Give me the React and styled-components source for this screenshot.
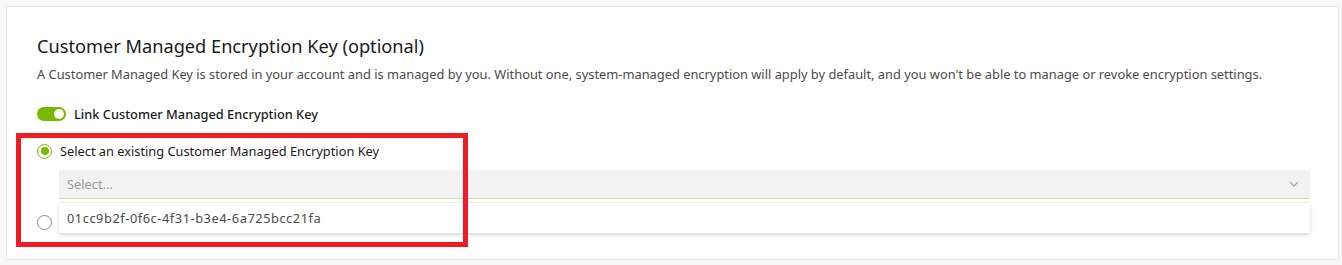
import styled, { createGlobalStyle } from "styled-components";

const GlobalStyle = createGlobalStyle`
    body {
        margin: 0;
        background: #f7f7f7;
        font-family: "Noto Sans", "Liberation Sans", sans-serif;
        color: #1a1a1a;
    }
`

function Chevron() {
    return (
        <svg width="12" height="12" viewBox="0 0 12 12" fill="none">
            <path d="M2.5 4.5 L6 8 L9.5 4.5" stroke="#a6a6a6" strokeWidth="1.2" strokeLinecap="round" strokeLinejoin="round" />
        </svg>
    )
}

function App() {
    return (
        <>
        <GlobalStyle />
        <Page>
            <Card>
                <Title>Customer Managed Encryption Key (optional)</Title>
                <Description>
                    A Customer Managed Key is stored in your account and is managed by you. Without one, system-managed encryption will apply by default, and you won't be able to manage or revoke encryption settings.
                </Description>
                <ToggleRow>
                    <Switch $on>
                        <span />
                    </Switch>
                    <ToggleLabel>Link Customer Managed Encryption Key</ToggleLabel>
                </ToggleRow>
                <Options>
                    <Highlight />
                    <RadioRow>
                        <Radio $checked />
                        <RadioLabel>Select an existing Customer Managed Encryption Key</RadioLabel>
                    </RadioRow>
                    <SelectWrap>
                        <SelectBox>
                            <Placeholder>Select...</Placeholder>
                            <Chevron />
                        </SelectBox>
                        <Menu>
                            <MenuItem>01cc9b2f-0f6c-4f31-b3e4-6a725bcc21fa</MenuItem>
                        </Menu>
                    </SelectWrap>
                    <RadioRow $second>
                        <Radio />
                    </RadioRow>
                </Options>
            </Card>
        </Page>
        </>
    )
}

const Page = styled.div`
    padding: 6px 3px 5px 6px;
`

const Card = styled.div`
    background: #fff;
    border: 1px solid #e8e8e8;
    height: 254px;
    box-sizing: border-box;
    padding: 27px 28px 0 30px;
`

const Title = styled.h2`
    margin: 0;
    font-size: 18.2px;
    font-weight: 400;
    line-height: 24px;
    color: #1a1a1a;
`

const Description = styled.p`
    margin: 7px 0 0;
    font-size: 12.85px;
    line-height: 18px;
    color: #4b4b4b;
`

const ToggleRow = styled.div`
    display: flex;
    align-items: center;
    gap: 8px;
    height: 18px;
    margin-top: 22px;
`

const Switch = styled.div`
    width: 29px;
    height: 14px;
    border-radius: 7px;
    background: ${p => p.$on ? "#76b900" : "#c4c4c4"};
    position: relative;

    span {
        position: absolute;
        top: 2px;
        left: ${p => p.$on ? "17px" : "2px"};
        width: 10px;
        height: 10px;
        border-radius: 50%;
        background: #fff;
    }
`

const ToggleLabel = styled.span`
    font-size: 12.8px;
    font-weight: 500;
    color: #1a1a1a;
`

const Options = styled.div`
    position: relative;
    margin-top: 19px;
`

const Highlight = styled.div`
    position: absolute;
    left: -21px;
    top: -9px;
    width: 452px;
    height: 114px;
    border: 5px solid #ee1c25;
    box-sizing: border-box;
    z-index: 5;
    pointer-events: none;
`

const RadioRow = styled.div`
    display: flex;
    align-items: center;
    gap: 8px;
    height: 18px;
    margin-top: ${p => p.$second ? "14px" : "0"};
`

const Radio = styled.span`
    width: 15px;
    height: 15px;
    box-sizing: border-box;
    border-radius: 50%;
    border: 1.5px solid ${p => p.$checked ? "#76b900" : "#8c8c8c"};
    display: flex;
    align-items: center;
    justify-content: center;

    &::after {
        content: "";
        display: ${p => p.$checked ? "block" : "none"};
        width: 8px;
        height: 8px;
        border-radius: 50%;
        background: #76b900;
    }
`

const RadioLabel = styled.span`
    font-size: 12.8px;
    color: #1a1a1a;
`

const SelectWrap = styled.div`
    position: relative;
    margin: 10px 0 0 22px;
`

const SelectBox = styled.div`
    height: 29px;
    box-sizing: border-box;
    background: #f2f2f2;
    border-bottom: 1px solid #c8e39c;
    display: flex;
    align-items: center;
    justify-content: space-between;
    padding: 0 10px 0 8px;
`

const Placeholder = styled.span`
    font-size: 12.8px;
    color: #9a9a9a;
`

const Menu = styled.div`
    position: absolute;
    top: 32px;
    left: 0;
    right: 0;
    background: #fff;
    border-top: 1px solid #ececec;
    box-shadow: 0 2px 4px rgba(0, 0, 0, 0.16);
    z-index: 3;
`

const MenuItem = styled.div`
    height: 30px;
    display: flex;
    align-items: center;
    padding: 0 8px;
    font-size: 12.8px;
    letter-spacing: 0.55px;
    color: #4b4b4b;
`

export default App;
